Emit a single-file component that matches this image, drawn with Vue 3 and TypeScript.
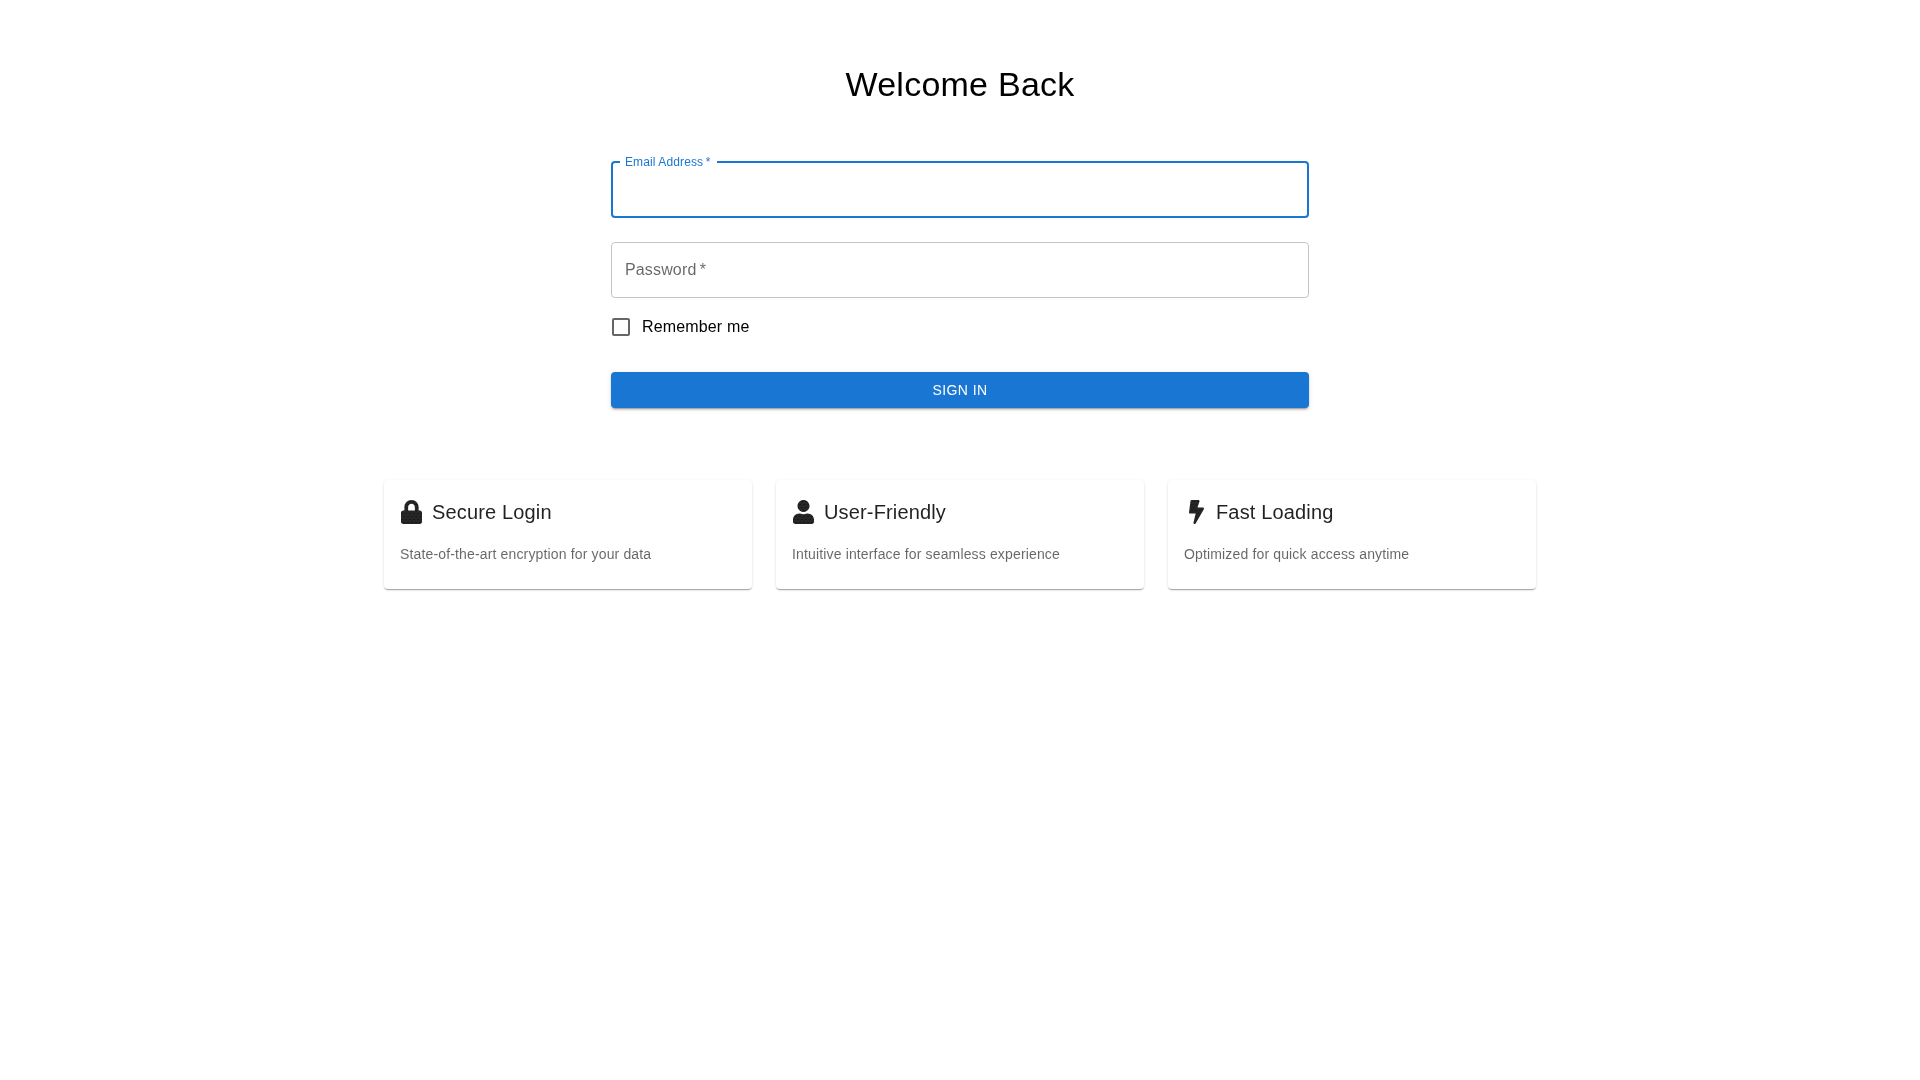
<script setup lang="ts">
const cards = [
  { title: 'Secure Login', text: 'State-of-the-art encryption for your data', w: 448,
    d: 'M400 224h-24v-72C376 68.2 307.8 0 224 0S72 68.2 72 152v72H48c-26.5 0-48 21.5-48 48v192c0 26.5 21.5 48 48 48h352c26.5 0 48-21.5 48-48V272c0-26.5-21.5-48-48-48zm-104 0H152v-72c0-39.7 32.3-72 72-72s72 32.3 72 72v72z' },
  { title: 'User-Friendly', text: 'Intuitive interface for seamless experience', w: 448,
    d: 'M224 256c70.7 0 128-57.3 128-128S294.7 0 224 0 96 57.3 96 128s57.3 128 128 128zm89.6 32h-16.7c-22.2 10.2-46.9 16-72.9 16s-50.6-5.8-72.9-16h-16.7C60.2 288 0 348.2 0 422.4V464c0 26.5 21.5 48 48 48h352c26.5 0 48-21.5 48-48v-41.6c0-74.2-60.2-134.4-134.4-134.4z' },
  { title: 'Fast Loading', text: 'Optimized for quick access anytime', w: 320,
    d: 'M296 160H180.6l42.6-129.8C227.2 15 215.7 0 200 0H56C44 0 33.8 8.9 32.2 20.8l-32 240C-1.7 275.2 9.5 288 24 288h118.7L96.6 482.5c-3.6 15.2 8 29.5 23.3 29.5 8.4 0 16.4-4.4 20.8-12l176-304c9.3-15.9-2.2-36-20.7-36z' },
]
</script>

<template>
  <main class="page">
    <h1 class="title">Welcome Back</h1>
    <form class="form" @submit.prevent>
      <div class="field focused">
        <span class="label small">Email Address&thinsp;*</span>
      </div>
      <div class="field">
        <span class="label">Password&thinsp;*</span>
      </div>
      <label class="remember">
        <span class="box"></span>
        <span>Remember me</span>
      </label>
      <button class="submit" type="button">Sign In</button>
    </form>
    <section class="cards">
      <article v-for="c in cards" :key="c.title" class="card">
        <div class="head">
          <span class="icon">
            <svg :viewBox="`0 0 ${c.w} 512`" :width="(c.w / 512) * 24" height="24" aria-hidden="true">
              <defs>
                <pattern :id="`dots-${c.w}-${c.title.length}`" patternUnits="userSpaceOnUse" width="85.33" height="128">
                  <rect width="85.33" height="128" fill="#262626" />
                  <circle cx="21" cy="32" r="11" fill="#000" />
                  <circle cx="64" cy="96" r="11" fill="#000" />
                </pattern>
              </defs>
              <path :d="c.d" :fill="`url(#dots-${c.w}-${c.title.length})`" />
            </svg>
          </span>
          <h2 class="card-title">{{ c.title }}</h2>
        </div>
        <p class="card-text">{{ c.text }}</p>
      </article>
    </section>
  </main>
</template>

<style scoped>
.page {
  box-sizing: border-box;
  width: 1200px;
  min-height: 1080px;
  margin: 0 auto;
  padding: 64px 24px 24px;
  font-family: "Liberation Sans", Arial, sans-serif;
  color: rgba(0, 0, 0, 0.87);
  will-change: transform;
}
.title {
  margin: 0;
  font-size: 34px;
  font-weight: 400;
  line-height: 40px;
  letter-spacing: 0.25px;
  text-align: center;
  color: #000;
}
.form {
  width: 698px;
  margin: 57px auto 0;
  display: flex;
  flex-direction: column;
}
.field {
  position: relative;
  box-sizing: border-box;
  height: 56px;
  border: 1px solid rgba(0, 0, 0, 0.23);
  border-radius: 4px;
  margin-bottom: 24px;
}
.field.focused {
  height: 57px;
  border: 2px solid #1976d2;
}
.label {
  position: absolute;
  left: 13px;
  top: 15px;
  font-size: 16px;
  line-height: 23px;
  letter-spacing: 0.15px;
  color: rgba(0, 0, 0, 0.6);
}
.label.small {
  left: 7px;
  top: -10px;
  padding: 0 7px 0 5px;
  background: #fff;
  font-size: 12px;
  line-height: 18px;
  letter-spacing: 0.11px;
  color: #1976d2;
}
.remember {
  display: flex;
  align-items: center;
  gap: 12px;
  height: 16px;
  margin-top: -3px;
  padding-left: 1px;
  font-size: 16px;
  letter-spacing: 0.15px;
  color: #000;
}
.box {
  box-sizing: border-box;
  width: 18px;
  height: 18px;
  border: 2px solid rgba(0, 0, 0, 0.6);
  border-radius: 2px;
}
.submit {
  height: 36px;
  margin-top: 37px;
  border: 0;
  border-radius: 4px;
  background: #1976d2;
  color: #fff;
  font-family: inherit;
  font-size: 14px;
  font-weight: 400;
  letter-spacing: 0.4px;
  text-transform: uppercase;
  box-shadow: 0 3px 1px -2px rgba(0,0,0,.2), 0 2px 2px 0 rgba(0,0,0,.14), 0 1px 5px 0 rgba(0,0,0,.12);
}
.cards {
  display: grid;
  grid-template-columns: repeat(3, 1fr);
  gap: 24px;
  margin-top: 72px;
}
.card {
  box-sizing: border-box;
  height: 109px;
  padding: 16px;
  border-radius: 4px;
  background: #fff;
  box-shadow: 0 2px 1px -1px rgba(0,0,0,.2), 0 1px 1px 0 rgba(0,0,0,.14), 0 1px 3px 0 rgba(0,0,0,.12);
}
.head {
  display: flex;
  align-items: center;
  gap: 8px;
}
.icon {
  display: flex;
  justify-content: flex-start;
  width: 24px;
  height: 24px;
  padding-left: 1.25px;
  box-sizing: border-box;
}
.card:last-child .icon {
  padding-left: 4.5px;
}
.card-title {
  margin: 0;
  font-size: 20px;
  font-weight: 400;
  line-height: 32px;
  letter-spacing: 0.15px;
}
.card-text {
  margin: 8px 0 0;
  padding-top: 8px;
  font-size: 14px;
  line-height: 20px;
  letter-spacing: 0.15px;
  color: rgba(0, 0, 0, 0.6);
}
</style>
